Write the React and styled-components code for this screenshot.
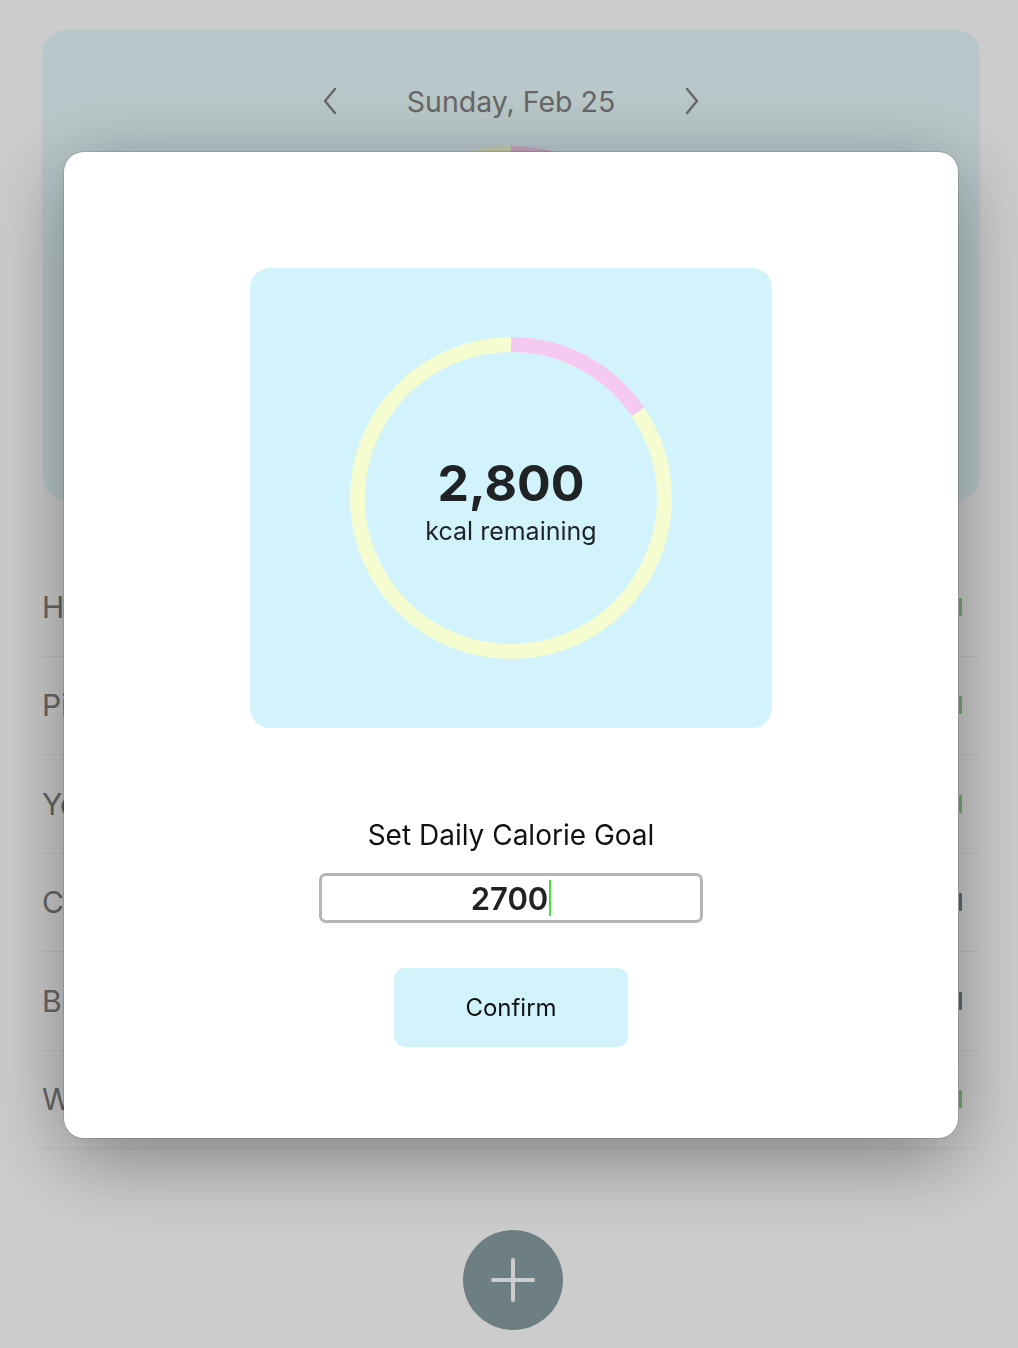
import React from 'react';
import styled, { createGlobalStyle } from 'styled-components';

const GlobalStyle = createGlobalStyle`
  html, body {
    margin: 0;
    padding: 0;
    background: #ffffff;
    font-family: Inter, "Noto Sans", "Liberation Sans", sans-serif;
  }
`;

const Page = styled.div`
  width: 1018px;
  height: 1348px;
  overflow: hidden;
  background: #ffffff;
  box-sizing: border-box;
  padding: 30px 38px 0 42px;
  display: flex;
  flex-direction: column;
`;

const SummaryCard = styled.div`
  height: 470px;
  background: #e7f9fc;
  border-radius: 24px;
  display: flex;
  flex-direction: column;
  align-items: center;
  padding-top: 51px;
  box-sizing: border-box;
  overflow: hidden;
`;

const DateNav = styled.div`
  display: flex;
  align-items: center;
  gap: 67px;
  color: #808080;
  font-size: 28.5px;
  height: 40px;
`;

const Chevron = styled.svg`
  width: 20px;
  height: 30px;
`;

const SmallRing = styled.div`
  margin-top: 25px;
`;

const FoodList = styled.div`
  margin-top: 58px;
  display: flex;
  flex-direction: column;
`;

const FoodRow = styled.div`
  height: 98.5px;
  display: flex;
  align-items: center;
  justify-content: space-between;
  border-bottom: 1px solid #f0f0f0;
  box-sizing: border-box;
  font-size: 30px;
  color: #808080;
  padding-bottom: 0;
`;

const Bar = styled.div`
  width: 3px;
  height: 18px;
  margin-right: 18px;
  border-radius: 1px;
  background: ${(p) => (p.$kind === 'ok' ? '#98d291' : '#77868c')};
`;

const AddButton = styled.button`
  align-self: center;
  margin-top: 81px;
  margin-right: -4px;
  width: 100px;
  height: 100px;
  border: none;
  border-radius: 50%;
  background: #8a9fa4;
  display: flex;
  align-items: center;
  justify-content: center;
  padding: 0;
`;

const Overlay = styled.div`
  position: fixed;
  inset: 0;
  background: rgba(0, 0, 0, 0.2);
  display: flex;
  justify-content: center;
  align-items: flex-start;
  padding-top: 152px;
`;

const Modal = styled.div`
  width: 894px;
  height: 986px;
  margin-left: 4px;
  background: #ffffff;
  border-radius: 20px;
  box-shadow: 0 0 0 1px rgba(0, 0, 0, 0.12), 0 20px 80px rgba(0, 0, 0, 0.38);
  display: flex;
  flex-direction: column;
  align-items: center;
  padding-top: 116px;
  box-sizing: border-box;
`;

const RingCard = styled.div`
  width: 522px;
  height: 460px;
  background: #d3f3fc;
  border-radius: 20px;
  display: flex;
  align-items: center;
  justify-content: center;
`;

const RingWrap = styled.div`
  position: relative;
  width: 322px;
  height: 322px;
`;

const RingCenter = styled.div`
  position: absolute;
  inset: 0;
  display: flex;
  flex-direction: column;
  align-items: center;
  justify-content: center;
  color: #1f2326;
  padding-top: 8px;
  box-sizing: border-box;
`;

const BigNumber = styled.div`
  font-size: 50px;
  font-weight: 700;
  line-height: 58px;
`;

const SubLabel = styled.div`
  font-size: 25px;
  line-height: 38px;
`;

const GoalLabel = styled.div`
  margin-top: 90px;
  font-size: 28px;
  color: #111;
  line-height: 34px;
`;

const GoalInput = styled.div`
  margin-top: 21px;
  width: 384px;
  height: 50px;
  border: 3px solid #b5b5b5;
  border-radius: 7px;
  box-sizing: border-box;
  display: flex;
  align-items: center;
  justify-content: center;
  font-size: 31px;
  font-weight: 600;
  color: #222;
`;

const Caret = styled.span`
  display: inline-block;
  width: 2px;
  height: 36px;
  background: #4cd94a;
  margin-left: 1px;
`;

const ConfirmButton = styled.button`
  margin-top: 45px;
  width: 234px;
  height: 79px;
  border: none;
  border-radius: 11px;
  background: #d3f3fc;
  font-family: inherit;
  font-size: 24px;
  color: #111;
`;

const R = 153.5;

const Ring = ({ size, r, stroke, pink }) => {
  const c = 2 * Math.PI * r;
  const mid = size / 2;
  return (
    <svg width={size} height={size} viewBox={`0 0 ${size} ${size}`}>
      <g transform={`rotate(-90 ${mid} ${mid})`}>
        <circle cx={mid} cy={mid} r={r} fill="none" stroke="#f5fdd0" strokeWidth={stroke} />
        <circle
          cx={mid}
          cy={mid}
          r={r}
          fill="none"
          stroke="#f5c9f1"
          strokeWidth={stroke}
          strokeDasharray={`${c * pink} ${c}`}
        />
      </g>
    </svg>
  );
};

const foods = [
  { name: 'Honeycrisp Apple', kind: 'ok' },
  { name: 'Pizza', kind: 'ok' },
  { name: 'Yogurt', kind: 'ok' },
  { name: 'Coffee', kind: 'dark' },
  { name: 'Bread', kind: 'dark' },
  { name: 'Water', kind: 'ok' },
];

export default function App() {
  return (
    <>
      <GlobalStyle />
      <Page>
        <SummaryCard>
          <DateNav>
            <Chevron viewBox="0 0 20 30">
              <path d="M15 3 L5 15 L15 27" fill="none" stroke="#808080" strokeWidth="2.4" strokeLinecap="round" strokeLinejoin="round" />
            </Chevron>
            <span>Sunday, Feb 25</span>
            <Chevron viewBox="0 0 20 30">
              <path d="M5 3 L15 15 L5 27" fill="none" stroke="#808080" strokeWidth="2.4" strokeLinecap="round" strokeLinejoin="round" />
            </Chevron>
          </DateNav>
          <SmallRing>
            <Ring size={322} r={R} stroke={15} pink={0.155} />
          </SmallRing>
        </SummaryCard>
        <FoodList>
          {foods.map((f) => (
            <FoodRow key={f.name}>
              <span>{f.name}</span>
              <Bar $kind={f.kind} />
            </FoodRow>
          ))}
        </FoodList>
        <AddButton aria-label="Add">
          <svg width="46" height="46" viewBox="0 0 46 46">
            <path d="M23 3 V43 M3 23 H43" stroke="#ffffff" strokeWidth="4" strokeLinecap="round" />
          </svg>
        </AddButton>
      </Page>
      <Overlay>
        <Modal>
          <RingCard>
            <RingWrap>
              <Ring size={322} r={R} stroke={15} pink={0.155} />
              <RingCenter>
                <BigNumber>2,800</BigNumber>
                <SubLabel>kcal remaining</SubLabel>
              </RingCenter>
            </RingWrap>
          </RingCard>
          <GoalLabel>Set Daily Calorie Goal</GoalLabel>
          <GoalInput>
            2700
            <Caret />
          </GoalInput>
          <ConfirmButton>Confirm</ConfirmButton>
        </Modal>
      </Overlay>
    </>
  );
}
